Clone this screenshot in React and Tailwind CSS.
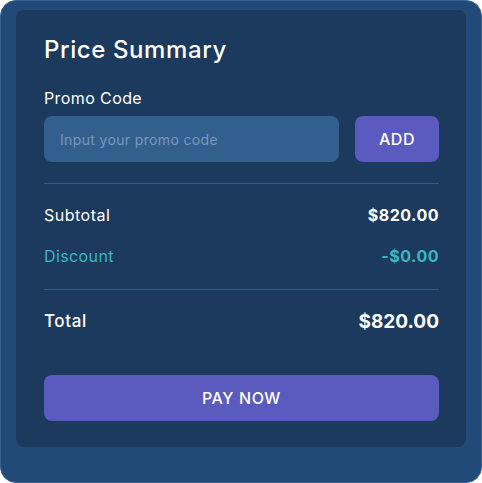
import React, { useState } from "react";

const font = { fontFamily: "Inter, 'DejaVu Sans', sans-serif" };

const PriceSummary = () => {
    const [promo, setPromo] = useState("");

    return (
        <div className="w-[482px] h-[483px] bg-white" style={font}>
            <div className="w-full h-full rounded-[16px] bg-[#224a78] border border-[#3b6190] pt-[9px] px-[15px]">
                <div className="rounded-[8px] bg-[#1c3a5e] pl-7 pr-[27px] pt-[26px] pb-[26px] h-[437px] flex flex-col">
                    <h1 className="text-[24px] leading-[28px] font-medium tracking-[0.6px] text-white">Price Summary</h1>

                    <label className="mt-[24px] text-[16px] leading-[20px] tracking-[0.4px] text-white">Promo Code</label>
                    <div className="mt-[8px] flex gap-4">
                        <input
                            type="text"
                            value={promo}
                            onChange={(e) => setPromo(e.target.value)}
                            placeholder="Input your promo code"
                            className="flex-1 h-[46px] rounded-[8px] bg-[#335f8f] px-4 text-[14px] tracking-[0.35px] text-white placeholder:text-[#7897bd] outline-none"
                        />
                        <button
                            type="button"
                            className="w-[84px] h-[46px] rounded-[8px] bg-[#5a5abf] text-[16px] font-medium tracking-[0.6px] text-white"
                        >
                            ADD
                        </button>
                    </div>

                    <div className="mt-[21px] h-px bg-[#345b84]" />

                    <div className="mt-[20px] flex items-center justify-between h-[22px]">
                        <span className="text-[16px] tracking-[0.5px] text-white">Subtotal</span>
                        <span className="text-[16px] font-bold tracking-[0.5px] text-white">$820.00</span>
                    </div>
                    <div className="mt-[19px] flex items-center justify-between h-[22px]">
                        <span className="text-[16px] tracking-[0.4px] text-[#3db6c2]">Discount</span>
                        <span className="text-[16px] font-bold tracking-[0.5px] text-[#3db6c2]">-$0.00</span>
                    </div>

                    <div className="mt-[22px] h-px bg-[#345b84]" />

                    <div className="mt-[20px] flex items-center justify-between h-[24px]">
                        <span className="text-[17px] font-medium tracking-[0.6px] text-white">Total</span>
                        <span className="text-[19px] font-bold text-white">$820.00</span>
                    </div>

                    <button
                        type="button"
                        className="mt-auto h-[46px] w-full rounded-[8px] bg-[#5a5abf] text-[16px] font-medium tracking-[0.6px] text-white"
                    >
                        PAY NOW
                    </button>
                </div>
            </div>
        </div>
    );
};

export default function App() {
    return <PriceSummary />;
}
